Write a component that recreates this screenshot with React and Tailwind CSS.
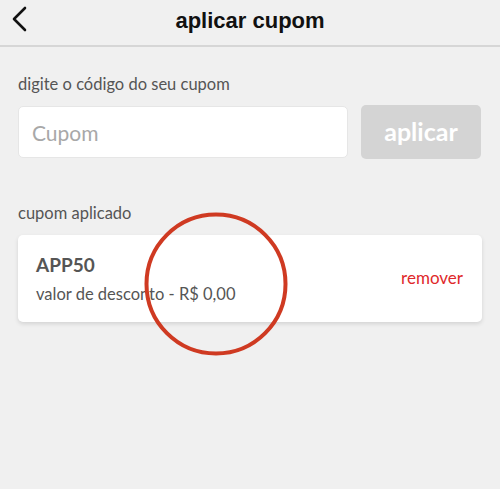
// Apply coupon screen with the applied coupon card and a hand-drawn red circle annotation

function BackChevron() {
  return (
    <svg width="16" height="26" viewBox="0 0 16 26" fill="none" className="shrink-0">
      <path d="M14 2 L3 13 L14 24" stroke="#111" strokeWidth="2.6" strokeLinecap="round" strokeLinejoin="round" />
    </svg>
  );
}

function Header() {
  return (
    <div className="relative h-[47px] flex items-center justify-center border-b-2 border-[#d6d6d6]">
      <button className="absolute left-[11px] top-[6px]">
        <BackChevron />
      </button>
      <h1 className="text-[22px] font-bold text-[#111] font-['Liberation_Sans',Arial,sans-serif] leading-none -mt-[4px]">
        aplicar cupom
      </h1>
    </div>
  );
}

function CouponForm() {
  return (
    <div className="px-[18px] pt-[27px]">
      <p className="text-[16.5px] text-[#555] leading-[20px]">digite o código do seu cupom</p>
      <div className="mt-[12px] flex gap-[13px]">
        <input
          placeholder="Cupom"
          className="w-[330px] h-[52px] rounded-[5px] bg-white border border-[#e6e6e6] px-[13px] text-[21px] placeholder:text-[#a8a8a8] outline-none"
        />
        <button className="w-[120px] h-[54px] -mt-[1px] rounded-[5px] bg-[#d4d4d4] text-white text-[25px] font-bold">
          aplicar
        </button>
      </div>
    </div>
  );
}

function AppliedCoupon() {
  return (
    <div className="px-[18px] pt-[44px]">
      <p className="text-[16.5px] text-[#555] leading-[20px]">cupom aplicado</p>
      <div className="mt-[12px] h-[87px] bg-white rounded-[5px] shadow-[0_2px_4px_rgba(0,0,0,0.12)] flex items-center justify-between pl-[18px] pr-[19px]">
        <div className="flex flex-col">
          <span className="text-[19px] font-bold text-[#555] leading-[24px]">APP50</span>
          <span className="text-[16.5px] text-[#555] leading-[22px] mt-[6px]">valor de desconto - R$ 0,00</span>
        </div>
        <button className="text-[17px] text-[#e0282a] -mt-[1px]">remover</button>
      </div>
    </div>
  );
}

export default function App() {
  return (
    <div className="relative w-[500px] h-[489px] bg-[#f0f0f0] overflow-hidden font-['Lato','Open_Sans',sans-serif]">
      <Header />
      <CouponForm />
      <AppliedCoupon />
      {/* annotation circle drawn over the card */}
      <svg className="absolute left-[143px] top-[211px] pointer-events-none" width="146" height="146" viewBox="0 0 146 146">
        <circle cx="73" cy="73" r="69.5" fill="none" stroke="#cf3a22" strokeWidth="4" />
      </svg>
    </div>
  );
}
